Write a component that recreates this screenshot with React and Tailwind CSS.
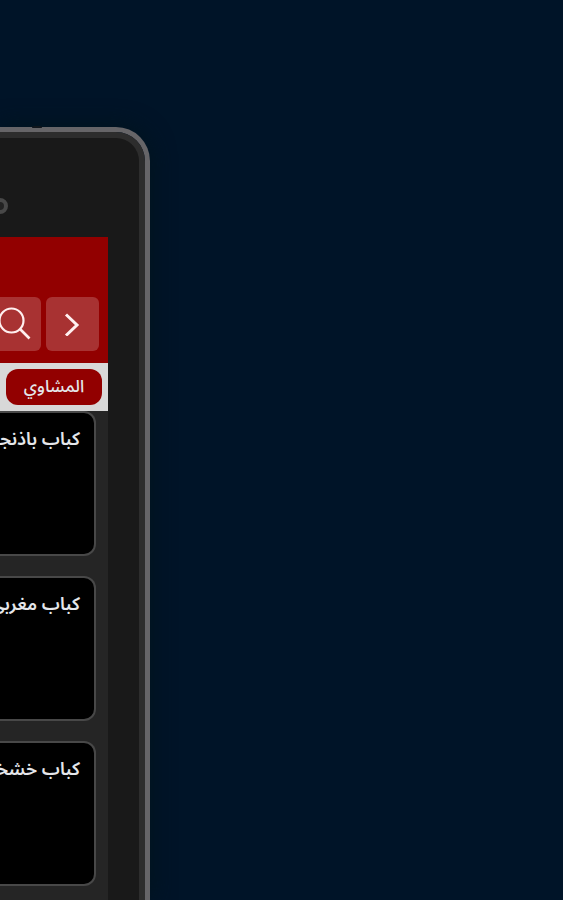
import { useState } from "react";

const meals = ["كباب باذنجان", "كباب مغربي", "كباب خشخاش"];

function SearchIcon() {
  return (
    <svg viewBox="0 0 36 36" fill="none" stroke="#fff0f0" strokeWidth="2.2" className="size-9 shrink-0" aria-hidden="true">
      <circle cx="14.5" cy="14.5" r="12" />
      <path d="M23 23 32.5 32.5" strokeWidth="2.6" />
    </svg>
  );
}

function ChevronIcon() {
  return (
    <svg viewBox="0 0 24 24" fill="none" stroke="#fff0f0" strokeWidth="3" className="size-6" aria-hidden="true">
      <path d="M5 2.5 16 13 5 23.5" />
    </svg>
  );
}

function MealCard({ name }) {
  return (
    <li className="h-[145px] shrink-0 overflow-hidden rounded-r-xl border-2 border-l-0 border-[#484848] bg-black pt-3 pr-3.5">
      <h2 className="text-lg leading-7 font-semibold whitespace-nowrap text-gray-200">{name}</h2>
    </li>
  );
}

export default function App() {
  const [active, setActive] = useState("المشاوي");

  return (
    <main
      dir="rtl"
      className="flex h-screen flex-col items-end overflow-hidden bg-[#001428] pt-[127px] font-['Noto_Sans_Arabic','Noto_Sans','DejaVu_Sans',sans-serif]"
    >
      <div className="relative flex min-h-0 w-[150px] flex-1 rounded-tr-[34px] border-t-[5px] border-r-[5px] border-[#666568] shadow-[0_0_24px_#00141c]">
        <span className="absolute -top-1.5 left-8 h-0.5 w-2.5 rounded-t bg-[#10161c]" />
        <div className="flex min-w-0 flex-1 flex-col rounded-tr-[29px] border-t-[6px] border-r-[6px] border-[#2d2d2d] bg-[#191919] pr-[31px]">
          <div className="flex h-[99px] shrink-0 items-end justify-end pb-[23px]">
            <span className="-ml-2 size-4 rounded-full border-4 border-[#484848] bg-[#222222]" />
          </div>

          <div className="flex min-h-0 flex-1 flex-col overflow-hidden bg-[#252525]">
            <header className="flex h-[126px] shrink-0 items-end gap-[5px] bg-[#920000] pr-[9px] pb-3">
              <button aria-label="رجوع" className="flex h-[54px] w-[53px] shrink-0 items-center justify-center rounded-md bg-[#a83232]">
                <ChevronIcon />
              </button>
              <button aria-label="بحث" className="flex h-[54px] w-[53px] shrink-0 items-center justify-center rounded-md bg-[#a83232]">
                <SearchIcon />
              </button>
            </header>

            <nav className="flex h-12 shrink-0 items-center bg-[#d8d8d8] pr-1.5">
              <button
                onClick={() => setActive("المشاوي")}
                aria-pressed={active === "المشاوي"}
                className="h-9 w-24 shrink-0 rounded-xl bg-[#920000] text-[17px] leading-6 font-medium text-gray-200"
              >
                المشاوي
              </button>
            </nav>

            <ul className="flex flex-col gap-5 pr-3">
              {meals.map((name) => (
                <MealCard key={name} name={name} />
              ))}
            </ul>
          </div>
        </div>
      </div>
    </main>
  );
}
